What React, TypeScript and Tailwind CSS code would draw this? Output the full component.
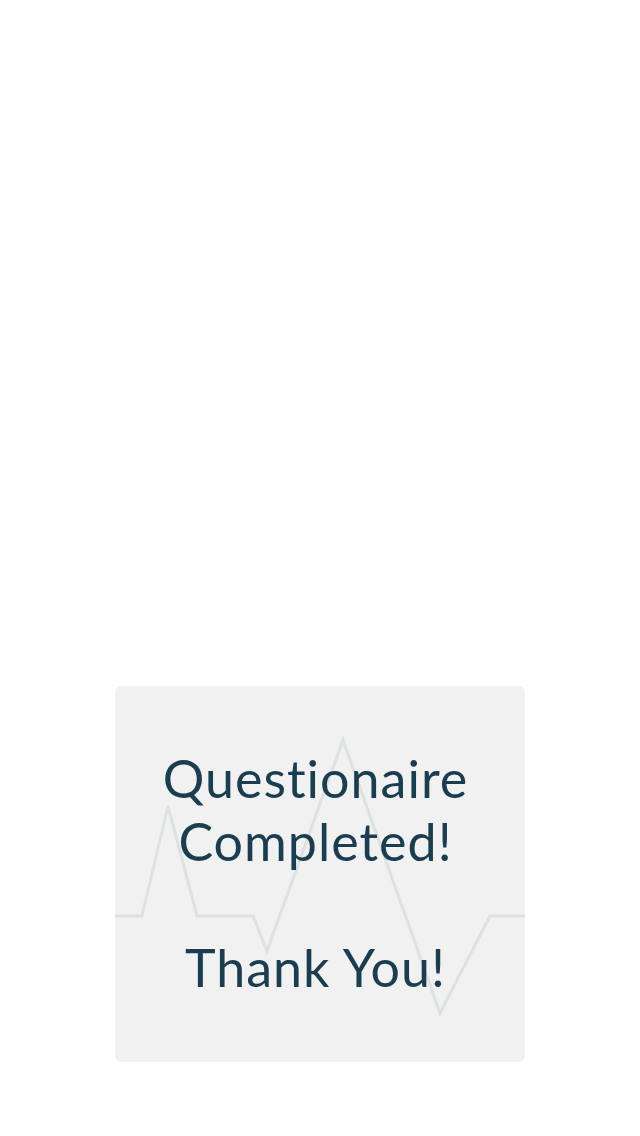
export default function App() {
  return (
    <div className="w-[640px] h-[1136px] bg-white flex flex-col items-center">
      <div className="mt-[686px] relative w-[410px] h-[376px] rounded-[6px] bg-[#f1f1f1] overflow-hidden">
        <svg
          className="absolute inset-0"
          width="410"
          height="376"
          viewBox="0 0 410 376"
          fill="none"
        >
          <polyline
            points="0,230 27,230 53,120 82,230 138,230 152,265 228,54 325,327 375,230 410,230"
            stroke="#dde1e1"
            strokeWidth="3"
            strokeLinejoin="miter"
          />
        </svg>
        <div
          className="relative pt-[61px] pr-[9px] text-center text-[52px] leading-[63px] tracking-[1px] text-[#1a3d4f] [font-variant-ligatures:none]"
          style={{ fontFamily: "Lato, 'Open Sans', sans-serif" }}
        >
          <p>Questionaire</p>
          <p>Completed!</p>
          <p className="mt-[63px]">Thank You!</p>
        </div>
      </div>
    </div>
  );
}
